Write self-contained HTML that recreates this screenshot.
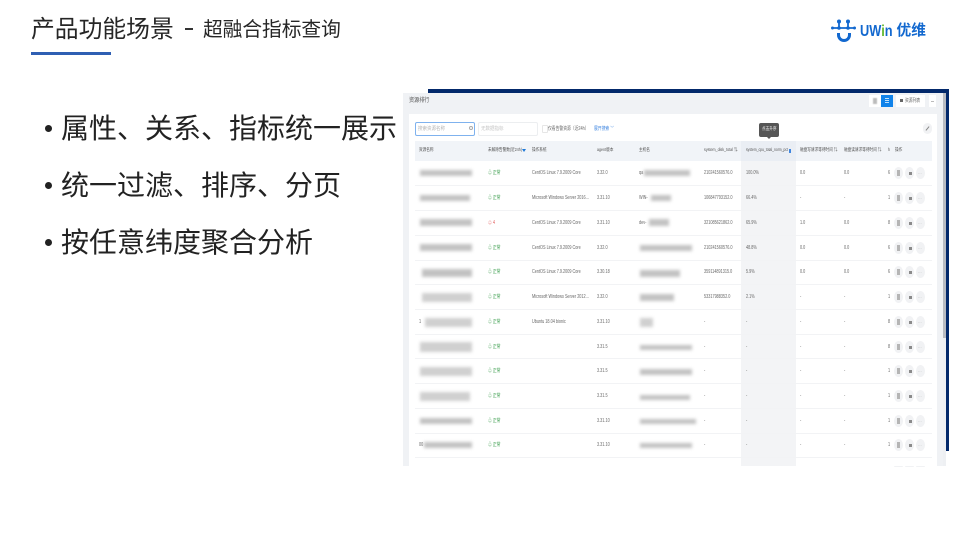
<!DOCTYPE html>
<html lang="zh"><head><meta charset="utf-8"><title>产品功能场景</title>
<style>
html,body{margin:0;padding:0;background:#fff}
body{width:956px;height:535px;overflow:hidden;position:relative;font-family:"Liberation Sans","Noto Sans CJK SC",sans-serif;color:#262626}
.a{position:absolute;white-space:nowrap}
.b{position:absolute;left:61px;font-size:28px;line-height:36px;color:#222;white-space:nowrap}
.d{position:absolute;left:45px;width:7px;height:7px;border-radius:50%;background:#222}
.t{position:absolute;font-size:5px;line-height:8px;white-space:nowrap;color:#666;filter:blur(.35px);transform:scaleX(.76);transform-origin:left center}
.h{color:#555;font-size:4.8px}
.g{color:#3f9f50}.r{color:#e25c5c}
.m{position:absolute;background:#c2c2c2;height:8px;filter:blur(1.6px)}
.l{position:absolute;left:415px;width:517px;height:1px;background:#f2f3f5}
.c{position:absolute;width:9px;height:12px;margin-top:-1.5px;border-radius:50%;background:#f1f2f4}
.i{position:absolute;width:3px;height:6px;background:#b5b5b5}
.k{position:absolute;width:3px;height:3px;background:#8b8b8b}
</style></head><body>

<div class="a" style="left:31px;top:13px;font-size:23.800px;line-height:34px;color:#262626">产品功能场景</div>
<div class="a" style="left:185px;top:28px;width:8px;height:2px;background:#333"></div>
<div class="a" style="left:203px;top:15px;font-size:19.700px;line-height:30px;color:#262626">超融合指标查询</div>
<div class="a" style="left:31px;top:52px;width:80px;height:3px;background:#2f5fb3"></div>

<svg class="a" style="left:831px;top:19px" width="26" height="24" viewBox="0 0 26 24">
<g fill="none" stroke="#1268cf" stroke-width="1.800">
<path d="M1 9H24"/><path d="M8 2.500V9"/><path d="M17 2.500V9"/>
<path d="M7.500 14V16A5.500 5.500 0 0 0 18.500 16V14" stroke-width="3"/></g>
<g fill="#1268cf"><circle cx="8" cy="2.500" r="2"/><circle cx="17" cy="2.500" r="2"/><circle cx="1.500" cy="9" r="1.500"/><circle cx="23.500" cy="9" r="1.500"/><circle cx="8" cy="9" r="1.800"/><circle cx="17" cy="9" r="1.800"/></g>
</svg>
<div class="a" style="left:860px;top:22px;font-size:16px;line-height:20px;font-weight:bold;color:#1268cf;transform:scaleX(.8);transform-origin:left center">UW<span style="color:#62b82e">i</span>n</div>
<div class="a" style="left:896.500px;top:21px;font-size:14.700px;line-height:20px;font-weight:bold;color:#1268cf">优维</div>

<div class="d" style="top:125px"></div>
<div class="b" style="top:111px">属性、关系、指标统一展示</div>
<div class="d" style="top:182px"></div>
<div class="b" style="top:168px">统一过滤、排序、分页</div>
<div class="d" style="top:239px"></div>
<div class="b" style="top:225px">按任意纬度聚合分析</div>

<!-- navy frame -->
<div class="a" style="left:428px;top:89px;width:521px;height:362px;background:#03296b"></div>
<div class="a" style="left:403px;top:93px;width:540px;height:373px;background:#f0f2f5"></div>
<div class="a" style="left:943px;top:93px;width:3px;height:245px;background:#b9bcc2"></div>
<div class="a" style="left:943px;top:338px;width:3px;height:128px;background:#eef0f3"></div>
<div class="a" style="left:409px;top:114px;width:528px;height:352px;background:#fff"></div>

<div class="t" style="left:409px;top:97px;font-size:6px;color:#555;transform:scaleX(.85)">资源排行</div>
<div class="a" style="left:869px;top:95px;width:12px;height:12px;background:#fff"></div>
<div class="a" style="left:873px;top:98px;width:4px;height:6px;background:#bcbcbc;filter:blur(.6px)"></div>
<div class="a" style="left:881px;top:95px;width:12px;height:12px;background:#1183ea"></div>
<div class="a" style="left:885px;top:98px;width:4px;height:1px;background:#bfe0fb"></div>
<div class="a" style="left:885px;top:100px;width:4px;height:1px;background:#bfe0fb"></div>
<div class="a" style="left:885px;top:102px;width:4px;height:1px;background:#bfe0fb"></div>
<div class="a" style="left:896px;top:95px;width:29px;height:12px;background:#fff"></div>
<div class="a" style="left:900px;top:99px;width:3px;height:3px;background:#666"></div>
<div class="t" style="left:905px;top:97px;font-size:5px">资源列表</div>
<div class="a" style="left:929px;top:95px;width:7px;height:12px;background:#fff"></div>
<div class="a" style="left:931px;top:101px;width:3px;height:1px;background:#bbb"></div>

<!-- filters -->
<div class="a" style="left:415px;top:122px;width:58px;height:12px;border:1px solid #7fb2ee;border-radius:2px;background:#fff"></div>
<div class="t" style="left:418px;top:125px;color:#b5b5b5;transform:scaleX(.9)">搜索资源名称</div>
<div class="a" style="left:469px;top:126px;width:2px;height:2px;border:1px solid #aaa;border-radius:50%"></div>
<div class="a" style="left:478px;top:122px;width:58px;height:12px;border:1px solid #eceef0;border-radius:2px"></div>
<div class="t" style="left:481px;top:125px;color:#c5c5c5;transform:scaleX(.9)">无数据指标</div>
<div class="a" style="left:541.500px;top:125px;width:4px;height:6px;border:1px solid #e6e6e6;border-radius:1px"></div>
<div class="t" style="left:548px;top:125px">仅看告警资源（近24h）</div>
<div class="t" style="left:594px;top:125px;color:#3f86e0">展开搜索 ﹀</div>
<div class="a" style="left:923px;top:123px;width:9px;height:11px;border-radius:5px;background:#f1f2f4"></div>
<div class="a" style="left:925px;top:128px;width:5px;height:1px;background:#888;transform:rotate(-50deg)"></div>

<!-- header -->
<div class="a" style="left:415px;top:141px;width:517px;height:20px;background:#f1f4f8"></div>
<div class="a" style="left:741px;top:141px;width:55px;height:325px;background:#f3f4f6"></div>
<div class="a" style="left:741px;top:141px;width:55px;height:20px;background:#eaeef4"></div>
<div class="a" style="left:759px;top:123px;width:20px;height:14px;background:#565656;border-radius:2px"></div>
<div class="a" style="left:767px;top:137px;border-left:2px solid transparent;border-right:2px solid transparent;border-top:2px solid #565656"></div>
<div class="t" style="left:762px;top:126px;color:#eee;font-size:4.800px">点击升序</div>
<div class="t h" style="left:419px;top:147px">资源名称</div>
<div class="t h" style="left:488px;top:147px">未解除告警数(近24h)</div>
<div class="a" style="left:522px;top:149px;border-left:2px solid transparent;border-right:2px solid transparent;border-top:3px solid #1b78d8"></div>
<div class="t h" style="left:532px;top:147px">操作系统</div>
<div class="t h" style="left:597px;top:147px">agent版本</div>
<div class="t h" style="left:639px;top:147px">主机名</div>
<div class="t h" style="left:704px;top:147px">system_disk_total ⇅</div>
<div class="t h" style="left:746px;top:147px;transform:scaleX(.7)">system_cpu_total_norm_pct</div>
<div class="a" style="left:789px;top:149px;width:2px;height:4px;background:#3f86e0"></div>
<div class="t h" style="left:800px;top:147px">磁盘写请求等待时间 ⇅</div>
<div class="t h" style="left:844px;top:147px">磁盘读请求等待时间 ⇅</div>
<div class="t h" style="left:888px;top:147px">h</div>
<div class="t h" style="left:895px;top:147px">操作</div>

<!-- row lines -->
<div class="l" style="top:185px"></div><div class="l" style="top:210px"></div><div class="l" style="top:235px"></div><div class="l" style="top:260px"></div><div class="l" style="top:284px"></div><div class="l" style="top:309px"></div><div class="l" style="top:334px"></div><div class="l" style="top:358px"></div><div class="l" style="top:383px"></div><div class="l" style="top:408px"></div><div class="l" style="top:433px"></div><div class="l" style="top:457px"></div>

<!-- names (blurred) -->
<div class="m" style="left:420px;top:170px;width:52px;height:6px"></div>
<div class="m" style="left:420px;top:195px;width:50px;height:6px"></div>
<div class="m" style="left:420px;top:219px;width:52px;height:7px"></div>
<div class="m" style="left:420px;top:244px;width:52px;height:7px"></div>
<div class="m" style="left:422px;top:269px;width:50px;height:8px"></div>
<div class="m" style="left:422px;top:293px;width:50px;height:9px;background:#d0d0d0"></div>
<div class="m" style="left:425px;top:318px;width:47px;height:9px;background:#d0d0d0"></div>
<div class="m" style="left:420px;top:342px;width:52px;height:10px;background:#d0d0d0"></div>
<div class="m" style="left:420px;top:367px;width:52px;height:9px;background:#d0d0d0"></div>
<div class="m" style="left:420px;top:392px;width:50px;height:9px;background:#d0d0d0"></div>
<div class="m" style="left:420px;top:418px;width:52px;height:6px"></div>
<div class="m" style="left:424px;top:442px;width:48px;height:6px"></div>
<div class="t" style="left:419px;top:318px">1</div>
<div class="t" style="left:419px;top:441px">00</div>

<!-- hosts (blurred) -->
<div class="t" style="left:639px;top:169px">qa</div><div class="m" style="left:644px;top:170px;width:46px;height:6px"></div>
<div class="t" style="left:639px;top:194px">WIN-</div><div class="m" style="left:651px;top:195px;width:20px;height:6px"></div>
<div class="t" style="left:639px;top:219px">dev-</div><div class="m" style="left:649px;top:219px;width:20px;height:7px"></div>
<div class="m" style="left:640px;top:245px;width:52px;height:6px"></div>
<div class="m" style="left:640px;top:270px;width:40px;height:7px"></div>
<div class="m" style="left:640px;top:294px;width:34px;height:7px"></div>
<div class="m" style="left:640px;top:318px;width:13px;height:9px;background:#d0d0d0"></div>
<div class="m" style="left:640px;top:345px;width:52px;height:5px"></div>
<div class="m" style="left:640px;top:369px;width:52px;height:6px"></div>
<div class="m" style="left:640px;top:395px;width:50px;height:5px"></div>
<div class="m" style="left:640px;top:419px;width:56px;height:5px"></div>
<div class="m" style="left:640px;top:443px;width:52px;height:5px"></div>

<!-- status -->
<div class="t g" style="left:488px;top:169px">♧ 正常</div>
<div class="t g" style="left:488px;top:194px">♧ 正常</div>
<div class="t r" style="left:488px;top:219px">♧ 4</div>
<div class="t g" style="left:488px;top:244px">♧ 正常</div>
<div class="t g" style="left:488px;top:268px">♧ 正常</div>
<div class="t g" style="left:488px;top:293px">♧ 正常</div>
<div class="t g" style="left:488px;top:318px">♧ 正常</div>
<div class="t g" style="left:488px;top:343px">♧ 正常</div>
<div class="t g" style="left:488px;top:367px">♧ 正常</div>
<div class="t g" style="left:488px;top:392px">♧ 正常</div>
<div class="t g" style="left:488px;top:417px">♧ 正常</div>
<div class="t g" style="left:488px;top:441px">♧ 正常</div>

<!-- OS -->
<div class="t" style="left:532px;top:169px">CentOS Linux 7.9.2009 Core</div>
<div class="t" style="left:532px;top:194px">Microsoft Windows Server 2016...</div>
<div class="t" style="left:532px;top:219px">CentOS Linux 7.9.2009 Core</div>
<div class="t" style="left:532px;top:244px">CentOS Linux 7.9.2009 Core</div>
<div class="t" style="left:532px;top:268px">CentOS Linux 7.9.2009 Core</div>
<div class="t" style="left:532px;top:293px">Microsoft Windows Server 2012...</div>
<div class="t" style="left:532px;top:318px">Ubuntu 18.04 bionic</div>

<!-- agent -->
<div class="t" style="left:597px;top:169px">3.32.0</div>
<div class="t" style="left:597px;top:194px">3.31.10</div>
<div class="t" style="left:597px;top:219px">3.31.10</div>
<div class="t" style="left:597px;top:244px">3.32.0</div>
<div class="t" style="left:597px;top:268px">3.30.18</div>
<div class="t" style="left:597px;top:293px">3.32.0</div>
<div class="t" style="left:597px;top:318px">3.31.10</div>
<div class="t" style="left:597px;top:343px">3.31.5</div>
<div class="t" style="left:597px;top:367px">3.31.5</div>
<div class="t" style="left:597px;top:392px">3.31.5</div>
<div class="t" style="left:597px;top:417px">3.31.10</div>
<div class="t" style="left:597px;top:441px">3.31.10</div>

<!-- disk -->
<div class="t" style="left:704px;top:169px">210241560576.0</div>
<div class="t" style="left:704px;top:194px">106847793152.0</div>
<div class="t" style="left:704px;top:219px">321085621862.0</div>
<div class="t" style="left:704px;top:244px">210241560576.0</div>
<div class="t" style="left:704px;top:268px">359114891315.0</div>
<div class="t" style="left:704px;top:293px">53317988352.0</div>
<div class="t" style="left:704px;top:318px">-</div><div class="t" style="left:704px;top:343px">-</div><div class="t" style="left:704px;top:367px">-</div><div class="t" style="left:704px;top:392px">-</div><div class="t" style="left:704px;top:417px">-</div><div class="t" style="left:704px;top:441px">-</div>

<!-- cpu -->
<div class="t" style="left:746px;top:169px">100.0%</div>
<div class="t" style="left:746px;top:194px">66.4%</div>
<div class="t" style="left:746px;top:219px">65.9%</div>
<div class="t" style="left:746px;top:244px">48.8%</div>
<div class="t" style="left:746px;top:268px">5.9%</div>
<div class="t" style="left:746px;top:293px">2.1%</div>
<div class="t" style="left:746px;top:318px">-</div><div class="t" style="left:746px;top:343px">-</div><div class="t" style="left:746px;top:367px">-</div><div class="t" style="left:746px;top:392px">-</div><div class="t" style="left:746px;top:417px">-</div><div class="t" style="left:746px;top:441px">-</div>

<!-- read / write -->
<div class="t" style="left:800px;top:169px">0.0</div><div class="t" style="left:844px;top:169px">0.0</div>
<div class="t" style="left:800px;top:194px">-</div><div class="t" style="left:844px;top:194px">-</div>
<div class="t" style="left:800px;top:219px">1.0</div><div class="t" style="left:844px;top:219px">0.0</div>
<div class="t" style="left:800px;top:244px">0.0</div><div class="t" style="left:844px;top:244px">0.0</div>
<div class="t" style="left:800px;top:268px">0.0</div><div class="t" style="left:844px;top:268px">0.0</div>
<div class="t" style="left:800px;top:293px">-</div><div class="t" style="left:844px;top:293px">-</div>
<div class="t" style="left:800px;top:318px">-</div><div class="t" style="left:844px;top:318px">-</div>
<div class="t" style="left:800px;top:343px">-</div><div class="t" style="left:844px;top:343px">-</div>
<div class="t" style="left:800px;top:367px">-</div><div class="t" style="left:844px;top:367px">-</div>
<div class="t" style="left:800px;top:392px">-</div><div class="t" style="left:844px;top:392px">-</div>
<div class="t" style="left:800px;top:417px">-</div><div class="t" style="left:844px;top:417px">-</div>
<div class="t" style="left:800px;top:441px">-</div><div class="t" style="left:844px;top:441px">-</div>

<!-- h -->
<div class="t" style="left:888px;top:169px">6</div><div class="t" style="left:888px;top:194px">1</div><div class="t" style="left:888px;top:219px">8</div><div class="t" style="left:888px;top:244px">6</div><div class="t" style="left:888px;top:268px">6</div><div class="t" style="left:888px;top:293px">1</div><div class="t" style="left:888px;top:318px">8</div><div class="t" style="left:888px;top:343px">8</div><div class="t" style="left:888px;top:367px">1</div><div class="t" style="left:888px;top:392px">1</div><div class="t" style="left:888px;top:417px">1</div><div class="t" style="left:888px;top:441px">1</div>

<!-- action icons -->
<div class="c" style="left:894px;top:168px"></div><div class="c" style="left:905px;top:168px"></div><div class="c" style="left:916px;top:168px"></div><div class="i" style="left:897px;top:170px"></div><div class="k" style="left:909px;top:172px"></div><div class="t" style="left:918px;top:169px;color:#bbb">…</div>
<div class="c" style="left:894px;top:193px"></div><div class="c" style="left:905px;top:193px"></div><div class="c" style="left:916px;top:193px"></div><div class="i" style="left:897px;top:195px"></div><div class="k" style="left:909px;top:197px"></div><div class="t" style="left:918px;top:194px;color:#bbb">…</div>
<div class="c" style="left:894px;top:218px"></div><div class="c" style="left:905px;top:218px"></div><div class="c" style="left:916px;top:218px"></div><div class="i" style="left:897px;top:220px"></div><div class="k" style="left:909px;top:222px"></div><div class="t" style="left:918px;top:219px;color:#bbb">…</div>
<div class="c" style="left:894px;top:243px"></div><div class="c" style="left:905px;top:243px"></div><div class="c" style="left:916px;top:243px"></div><div class="i" style="left:897px;top:245px"></div><div class="k" style="left:909px;top:247px"></div><div class="t" style="left:918px;top:244px;color:#bbb">…</div>
<div class="c" style="left:894px;top:267px"></div><div class="c" style="left:905px;top:267px"></div><div class="c" style="left:916px;top:267px"></div><div class="i" style="left:897px;top:269px"></div><div class="k" style="left:909px;top:271px"></div><div class="t" style="left:918px;top:268px;color:#bbb">…</div>
<div class="c" style="left:894px;top:292px"></div><div class="c" style="left:905px;top:292px"></div><div class="c" style="left:916px;top:292px"></div><div class="i" style="left:897px;top:294px"></div><div class="k" style="left:909px;top:296px"></div><div class="t" style="left:918px;top:293px;color:#bbb">…</div>
<div class="c" style="left:894px;top:317px"></div><div class="c" style="left:905px;top:317px"></div><div class="c" style="left:916px;top:317px"></div><div class="i" style="left:897px;top:319px"></div><div class="k" style="left:909px;top:321px"></div><div class="t" style="left:918px;top:318px;color:#bbb">…</div>
<div class="c" style="left:894px;top:342px"></div><div class="c" style="left:905px;top:342px"></div><div class="c" style="left:916px;top:342px"></div><div class="i" style="left:897px;top:344px"></div><div class="k" style="left:909px;top:346px"></div><div class="t" style="left:918px;top:343px;color:#bbb">…</div>
<div class="c" style="left:894px;top:366px"></div><div class="c" style="left:905px;top:366px"></div><div class="c" style="left:916px;top:366px"></div><div class="i" style="left:897px;top:368px"></div><div class="k" style="left:909px;top:370px"></div><div class="t" style="left:918px;top:367px;color:#bbb">…</div>
<div class="c" style="left:894px;top:391px"></div><div class="c" style="left:905px;top:391px"></div><div class="c" style="left:916px;top:391px"></div><div class="i" style="left:897px;top:393px"></div><div class="k" style="left:909px;top:395px"></div><div class="t" style="left:918px;top:392px;color:#bbb">…</div>
<div class="c" style="left:894px;top:416px"></div><div class="c" style="left:905px;top:416px"></div><div class="c" style="left:916px;top:416px"></div><div class="i" style="left:897px;top:418px"></div><div class="k" style="left:909px;top:420px"></div><div class="t" style="left:918px;top:417px;color:#bbb">…</div>
<div class="c" style="left:894px;top:440px"></div><div class="c" style="left:905px;top:440px"></div><div class="c" style="left:916px;top:440px"></div><div class="i" style="left:897px;top:442px"></div><div class="k" style="left:909px;top:444px"></div><div class="t" style="left:918px;top:441px;color:#bbb">…</div>
<div class="c" style="left:894px;top:465.500px;height:1px;margin:0;border-radius:5px 5px 0 0"></div><div class="c" style="left:905px;top:465.500px;height:1px;margin:0;border-radius:5px 5px 0 0"></div><div class="c" style="left:916px;top:465.500px;height:1px;margin:0;border-radius:5px 5px 0 0"></div>
</body></html>
